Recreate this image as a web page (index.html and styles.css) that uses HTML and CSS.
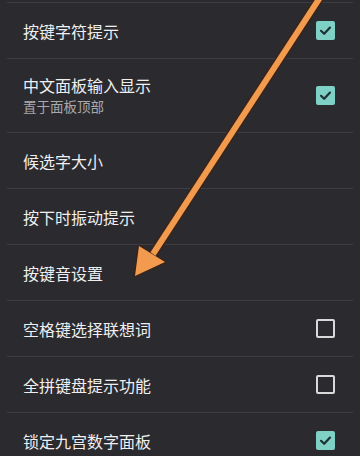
FILE: index.html
```html
<!DOCTYPE html>
<html lang="zh-CN">
<head>
<meta charset="utf-8">
<link rel="stylesheet" href="styles.css">
</head>
<body>
<div class="page">
  <div class="list">
    <div class="row">
      <div class="text"><div class="title">按键字符提示</div></div>
      <span class="cb on"><svg viewBox="0 0 19 19"><path d="M5 9.8 L8.2 12.8 L14 6.6"/></svg></span>
    </div>
    <div class="row tall">
      <div class="text"><div class="title">中文面板输入显示</div><div class="sub">置于面板顶部</div></div>
      <span class="cb on"><svg viewBox="0 0 19 19"><path d="M5 9.8 L8.2 12.8 L14 6.6"/></svg></span>
    </div>
    <div class="row">
      <div class="text"><div class="title">候选字大小</div></div>
    </div>
    <div class="row">
      <div class="text"><div class="title">按下时振动提示</div></div>
    </div>
    <div class="row">
      <div class="text"><div class="title">按键音设置</div></div>
    </div>
    <div class="row">
      <div class="text"><div class="title">空格键选择联想词</div></div>
      <span class="cb off"></span>
    </div>
    <div class="row">
      <div class="text"><div class="title">全拼键盘提示功能</div></div>
      <span class="cb off"></span>
    </div>
    <div class="row">
      <div class="text"><div class="title">锁定九宫数字面板</div></div>
      <span class="cb on"><svg viewBox="0 0 19 19"><path d="M5 9.8 L8.2 12.8 L14 6.6"/></svg></span>
    </div>
  </div>
  <svg class="arrow" viewBox="0 0 360 456" width="360" height="456">
    <g class="outline">
      <line x1="321" y1="-4" x2="153" y2="254"/>
      <polygon points="139,246 165,262 135,276"/>
    </g>
    <g class="fill">
      <line x1="321" y1="-4" x2="153" y2="254"/>
      <polygon points="139,246 165,262 135,276"/>
    </g>
  </svg>
</div>
</body>
</html>
```

FILE: styles.css
```css
html, body {
  margin: 0;
  padding: 0;
  background: #2b2a2f;
}
.page {
  position: relative;
  width: 360px;
  height: 456px;
  overflow: hidden;
  background: #2b2a2f;
  font-family: "Noto Sans CJK SC", "Noto Sans", sans-serif;
}
.list {
  padding-top: 2px;
}
.row {
  display: flex;
  align-items: center;
  height: 56px;
  margin: 0 7px;
  padding: 0 18px 0 16px;
  border-top: 1px solid #3e3d43;
  box-sizing: border-box;
}
.row.tall {
  height: 74px;
}
.text {
  flex: 1;
}
.title {
  font-size: 16px;
  line-height: 20px;
  color: #efefef;
}
.sub {
  font-size: 13.5px;
  line-height: 19px;
  color: #a9a8ac;
  margin-top: 2px;
}
.cb {
  width: 19px;
  height: 19px;
  box-sizing: border-box;
  border-radius: 2px;
  display: block;
}
.cb.on {
  background: #7fd0c5;
}
.cb.on svg {
  display: block;
  width: 19px;
  height: 19px;
}
.cb.on path {
  fill: none;
  stroke: #1e3233;
  stroke-width: 2.2;
  stroke-linecap: round;
  stroke-linejoin: round;
}
.cb.off {
  border: 2px solid #d9d9d9;
}
.arrow {
  position: absolute;
  left: 0;
  top: 0;
}
.arrow .outline line {
  stroke: #3a2418;
  stroke-width: 9;
}
.arrow .outline polygon {
  fill: #3a2418;
  stroke: #3a2418;
  stroke-width: 3;
  stroke-linejoin: round;
}
.arrow .fill line {
  stroke: #f29a4e;
  stroke-width: 6;
}
.arrow .fill polygon {
  fill: #f29a4e;
}
```
